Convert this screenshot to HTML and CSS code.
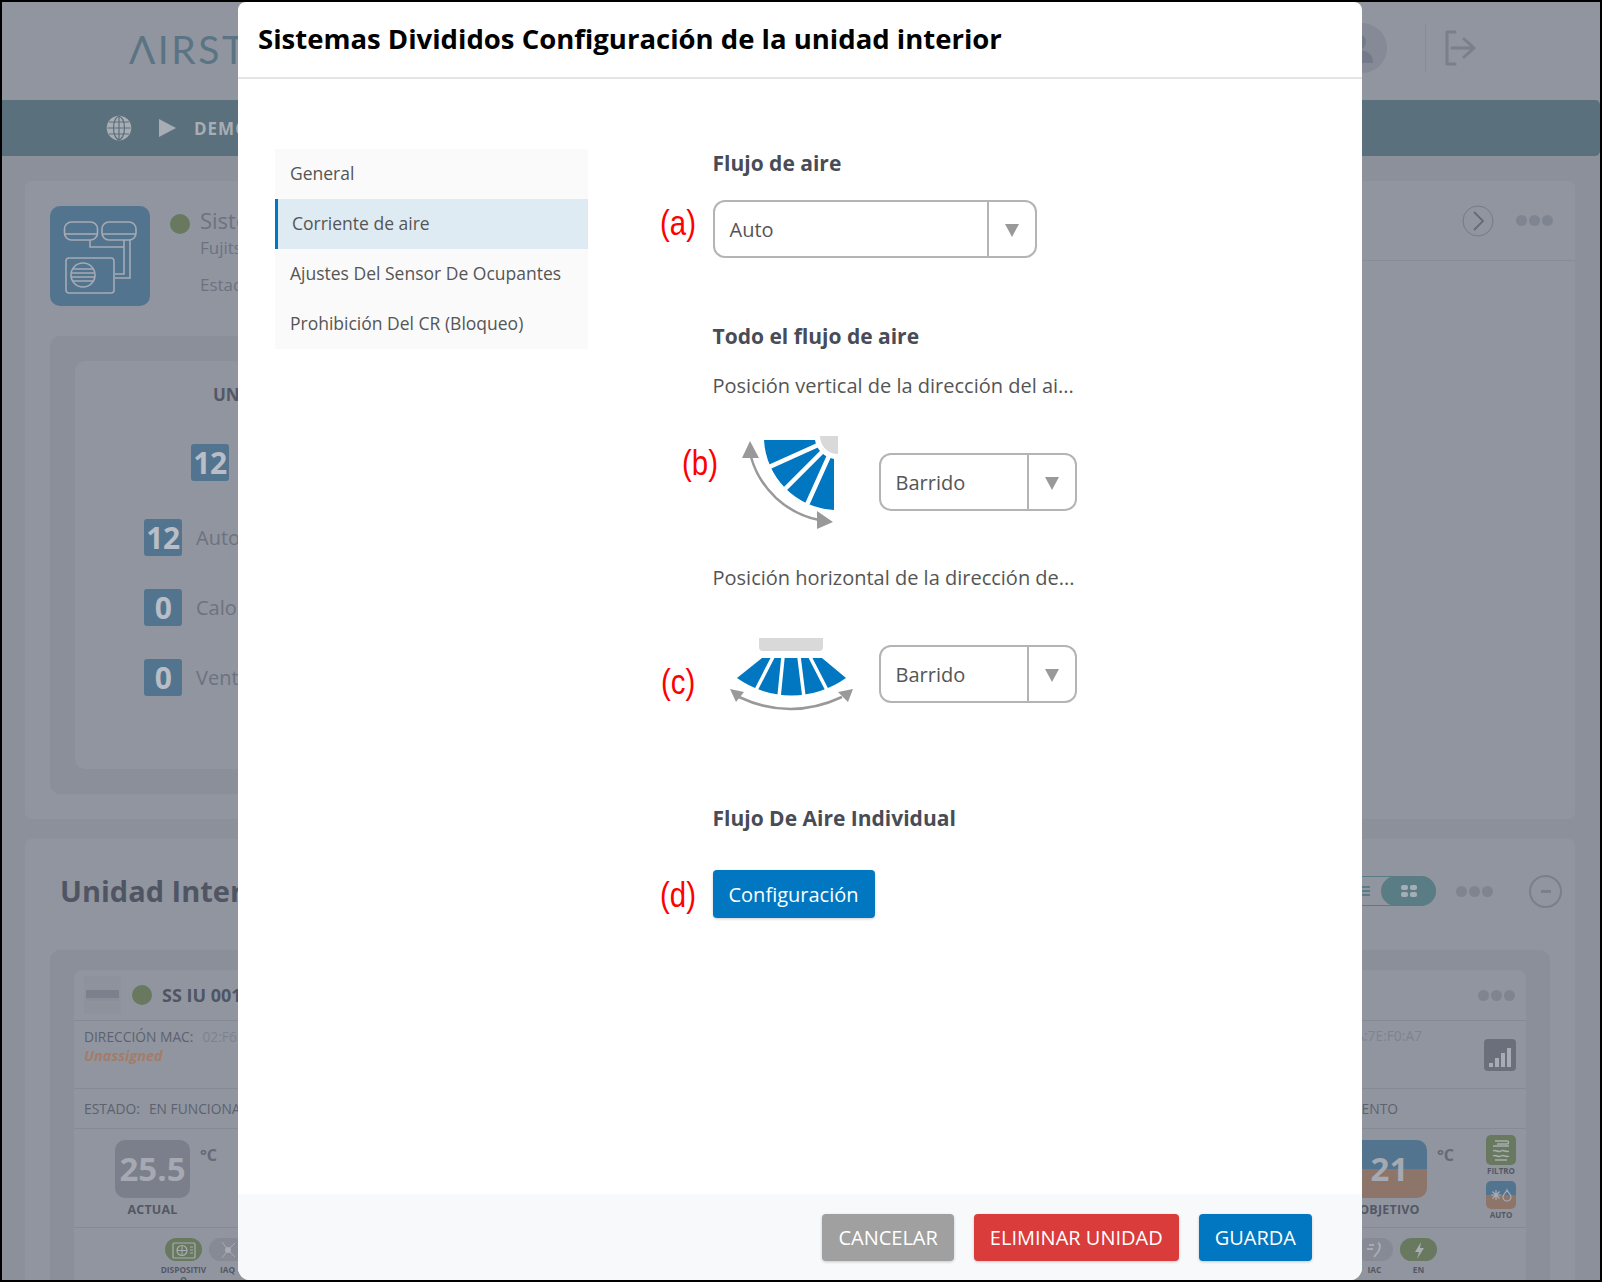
FILE: index.html
```html
<!DOCTYPE html>
<html lang="es">
<head>
<meta charset="utf-8">
<title>Sistemas Divididos Configuración de la unidad interior</title>
<link rel="stylesheet" href="styles.css">
</head>
<body>
<div class="frame">
  <div class="app">
    <header class="top">
      <div class="logo">ΛIRST</div>
      <div class="top-right">
        <div class="avatar">
          <svg viewBox="0 0 50 50" width="50" height="50"><circle cx="21" cy="19" r="8" fill="#747a89"/><path d="M7 40c0-10 6-13 14-13s15 3 15 13z" fill="#747a89"/></svg>
        </div>
        <div class="top-sep"></div>
        <svg class="exit" viewBox="0 0 32 36" width="32" height="36"><path d="M11 2H3v32h8" fill="none" stroke="#7a7f8c" stroke-width="3" stroke-linejoin="round" stroke-linecap="round"/><path d="M8 18h21M20 9l10 9-10 9" fill="none" stroke="#7a7f8c" stroke-width="3" stroke-linecap="round" stroke-linejoin="round"/></svg>
      </div>
    </header>
    <nav class="bar">
      <svg viewBox="0 0 26 26" width="26" height="26"><g fill="none" stroke="#a8adb5" stroke-width="1.6"><circle cx="13" cy="13" r="11.5" fill="#a8adb5"/></g><g fill="none" stroke="#5a707d" stroke-width="1.2"><ellipse cx="13" cy="13" rx="5.5" ry="11.5"/><path d="M13 1v24M1.500 13h23M3 7h20M3 19h20"/></g></svg>
      <svg class="play" viewBox="0 0 17 18" width="17" height="18"><path d="M0 0l17 9-17 9z" fill="#a8adb5"/></svg>
      <span class="crumb">DEMO</span>
    </nav>

    <section class="card card-system">
      <div class="sys-left">
        <div class="sys-top">
          <div class="sys-tile">
            <svg viewBox="0 0 100 100" width="100" height="100"><g fill="none" stroke="#a6abb5" stroke-width="1.6"><rect x="14.500" y="16" width="33" height="18" rx="7"/><path d="M15 28h32"/><rect x="52" y="16" width="34" height="18" rx="7"/><path d="M52 28h34"/><path d="M40 34v7h32M80 34v38H65M74 34v34h-9M40 41h34"/><rect x="16" y="52" width="48" height="35" rx="3"/><circle cx="33" cy="69" r="12"/><path d="M23 63h20M21.500 67h23M21.500 71h23M23 75h20"/></g></svg>
          </div>
          <span class="dot-green"></span>
          <div class="sys-text">
            <div class="sys-name">Sistema</div>
            <div class="sys-sub">Fujitsu</div>
            <div class="sys-state">Estado</div>
          </div>
        </div>
        <div class="panel">
          <div class="panel-in">
            <div class="units-title">UNIDADES</div>
            <div class="num-tile num-main">12</div>
            <div class="mode-row"><span class="num-tile">12</span><span>Auto</span></div>
            <div class="mode-row"><span class="num-tile">0</span><span>Calor</span></div>
            <div class="mode-row"><span class="num-tile">0</span><span>Vent</span></div>
          </div>
        </div>
      </div>
      <div class="sys-right">
        <svg viewBox="0 0 32 32" width="32" height="32"><circle cx="16" cy="16" r="15" fill="none" stroke="#757a87" stroke-width="1"/><path d="M12 7l9 9-9 9" fill="none" stroke="#656a78" stroke-width="1.800"/></svg>
        <div class="dots"><i></i><i></i><i></i></div>
      </div>
    </section>

    <section class="card card-units">
      <div class="units-head">
        <h2 class="units-h">Unidad Interior</h2>
        <div class="units-tools">
          <div class="toggle">
            <span class="toggle-list"><i></i><i></i><i></i></span>
            <span class="toggle-on"><svg viewBox="0 0 16 12" width="16" height="12"><g fill="#a7adb5"><rect x="0" y="0" width="7" height="5" rx="2"/><rect x="9" y="0" width="7" height="5" rx="2"/><rect x="0" y="7" width="7" height="5" rx="2"/><rect x="9" y="7" width="7" height="5" rx="2"/></g></svg></span>
          </div>
          <div class="dots"><i></i><i></i><i></i></div>
          <div class="minus"><i></i></div>
        </div>
      </div>
      <div class="panel panel-wide">
        <div class="unit">
          <div class="u-row u-head">
            <div class="u-head-left">
              <span class="u-thumb"><i></i></span>
              <span class="dot-green"></span>
              <strong class="u-name">SS IU 001</strong>
            </div>
            <div class="dots"><i></i><i></i><i></i></div>
          </div>
          <div class="u-row u-mac">
            <div>
              <div class="u-mac-line"><span class="u-label">DIRECCIÓN MAC:</span><span class="u-val">02:F6:8A:7E:F0:A7</span></div>
              <div class="u-warn">Unassigned</div>
            </div>
            <div class="u-mac-right">
              <span class="u-val u-mac-line">02:F6:8A:7E:F0:A7</span>
              <span class="signal"><svg viewBox="0 0 32 32" width="32" height="32"><g fill="#a7abb4"><rect x="5" y="24" width="4" height="4"/><rect x="11" y="19" width="4" height="9"/><rect x="17" y="14" width="4" height="14"/><rect x="23" y="9" width="4" height="19"/></g></svg></span>
            </div>
          </div>
          <div class="u-row u-state">
            <div><span class="u-label">ESTADO:</span><span class="u-state-val">EN FUNCIONAMIENTO</span></div>
            <div class="u-state-right">EN FUNCIONAMIENTO</div>
          </div>
          <div class="u-row u-temps">
            <div class="temp-block">
              <div class="temp-col"><div class="temp-tile">25.5</div><div class="temp-cap">ACTUAL</div></div>
              <span class="deg">°C</span>
            </div>
            <div class="temp-block temp-right">
              <div class="temp-col"><div class="temp-tile temp-split">21</div><div class="temp-cap">OBJETIVO</div></div>
              <span class="deg">°C</span>
              <div class="side-icons">
                <div class="side"><span class="side-tile side-green"><svg viewBox="0 0 30 30" width="30" height="30"><path d="M9 6h12c2 0 2 3 0 3H11M7 11h16M7 16c3-2 5 2 8 0s5 2 8 0M7 21c3-2 5 2 8 0s5 2 8 0M9 25h12" fill="none" stroke="#a7adb0" stroke-width="1.500"/></svg></span><span class="side-cap">FILTRO</span></div>
                <div class="side"><span class="side-tile side-split"><svg viewBox="0 0 30 28" width="30" height="28"><path d="M10 9v10M5 14h10M6.500 10.500l7 7M13.500 10.500l-7 7" stroke="#a7adb5" stroke-width="1.200"/><path d="M21 9c1 3 4 4 4 7a4 4 0 0 1-8 0c0-3 3-4 4-7z" fill="none" stroke="#a7adb5" stroke-width="1.200"/></svg></span><span class="side-cap">AUTO</span></div>
              </div>
            </div>
          </div>
          <div class="u-row u-pills">
            <div class="pills">
              <div class="pill-item"><span class="pill pill-green"><svg viewBox="0 0 28 22" width="28" height="22"><rect x="3" y="4" width="22" height="15" rx="1" fill="none" stroke="#a7adb0" stroke-width="1.200"/><circle cx="12" cy="11.500" r="5" fill="none" stroke="#a7adb0" stroke-width="1.200"/><path d="M20 8h3M20 11h3M20 14h3M7 11.500h10M12 7v9" stroke="#a7adb0"/></svg></span><span class="pill-cap">DISPOSITIVO</span></div>
              <div class="pill-item"><span class="pill"><svg viewBox="0 0 28 22" width="28" height="22"><path d="M8 3l6 8 7-7M14 11l-6 8M14 11l7 7" stroke="#a7abb4" fill="none"/><circle cx="14" cy="11" r="3" fill="#a7abb4"/></svg></span><span class="pill-cap">IAQ</span></div>
            </div>
            <div class="pills">
              <div class="pill-item"><span class="pill"><svg viewBox="0 0 28 22" width="28" height="22"><path d="M17 4c3 1 2 6 0 9l-4 5M8 6h5M6 10h6" fill="none" stroke="#a7abb4" stroke-width="2"/></svg></span><span class="pill-cap">IAC</span></div>
              <div class="pill-item"><span class="pill pill-green"><svg viewBox="0 0 28 22" width="28" height="22"><path d="M16 3l-6 10h4l-2 7 7-11h-4z" fill="#a7adb0"/></svg></span><span class="pill-cap">EN</span></div>
            </div>
          </div>
        </div>
      </div>
    </section>
  </div>

  <div class="modal">
    <header class="m-head"><h1 class="m-title">Sistemas Divididos Configuración de la unidad interior</h1></header>
    <div class="m-body">
      <ul class="menu">
        <li class="menu-item">General</li>
        <li class="menu-item is-active">Corriente de aire</li>
        <li class="menu-item">Ajustes Del Sensor De Ocupantes</li>
        <li class="menu-item">Prohibición Del CR (Bloqueo)</li>
      </ul>
      <div class="form">
        <h3 class="f-h f-first">Flujo de aire</h3>
        <div class="select select-wide sec-a">
          <span class="anno anno-a">(a)</span>
          <span class="select-val">Auto</span><span class="select-btn"><i class="tri"></i></span>
        </div>
        <h3 class="f-h sec-b">Todo el flujo de aire</h3>
        <p class="f-p sec-p1">Posición vertical de la dirección del ai...</p>
        <div class="dir-row row-b">
          <span class="anno anno-b">(b)</span>
          <svg viewBox="0 1 140 110" width="140" height="110">
            <path d="M44 14L95 14A23 23 0 0 0 114 33L114 84A74 74 0 0 1 44 14Z" fill="#0077c0"/>
            <path d="M118 10L36 47M118 10L54 74M118 10L81 92" stroke="#fff" stroke-width="4.500"/>
            <path d="M118 10L100 10A18 18 0 0 0 118 28Z" fill="#d9d9d9"/>
            <path d="M31 31A89 89 0 0 0 99 94" fill="none" stroke="#999" stroke-width="2.500"/>
            <path d="M30 15L39 32L22 32Z M113 96L97 85L97 103Z" fill="#999"/>
          </svg>
          <div class="select"><span class="select-val">Barrido</span><span class="select-btn"><i class="tri"></i></span></div>
        </div>
        <p class="f-p sec-p2">Posición horizontal de la dirección de...</p>
        <div class="dir-row row-c">
          <span class="anno anno-c">(c)</span>
          <svg viewBox="0 -1 140 90" width="140" height="90">
            <path d="M39 8H103V17A4 4 0 0 1 99 21H43A4 4 0 0 1 39 17Z" fill="#d9d9d9"/>
            <path d="M42 28L102 28L126 48A94 94 0 0 1 17 48Z" fill="#0077c0"/>
            <path d="M53 27L35 62M63 27L59 67M79 27L84 67M90 27L108 62" stroke="#fff" stroke-width="3.500"/>
            <path d="M19 67Q70 91 122 67" fill="none" stroke="#999" stroke-width="2.500"/>
            <path d="M10 59L24 62L16 72Z M133 59L118 62L128 72Z" fill="#999"/>
          </svg>
          <div class="select"><span class="select-val">Barrido</span><span class="select-btn"><i class="tri"></i></span></div>
        </div>
        <h3 class="f-h sec-d">Flujo De Aire Individual</h3>
        <div class="cfg-wrap">
          <span class="anno anno-d">(d)</span>
          <button class="btn btn-blue btn-cfg">Configuración</button>
        </div>
      </div>
    </div>
    <footer class="m-foot">
      <button class="btn btn-grey">CANCELAR</button>
      <button class="btn btn-red">ELIMINAR UNIDAD</button>
      <button class="btn btn-blue">GUARDA</button>
    </footer>
  </div>
</div>
</body>
</html>
```
FILE: styles.css
```css
* { box-sizing: border-box; }
html, body { margin: 0; padding: 0; }
body { font-family: "Open Sans", sans-serif; background: #000; }
.frame { position: relative; width: 1602px; height: 1282px; border: 2px solid #000; overflow: hidden; background: #8b909b; }
.app { height: 100%; overflow: hidden; color: #6d7280; }

.top { height: 98px; display: flex; align-items: center; justify-content: space-between; padding: 0 0 0 127px; background: #91959f; }
.logo { font-family: Lato, sans-serif; font-weight: 400; font-size: 39px; line-height: 40px; letter-spacing: 2.5px; color: #5a7484; margin-top: -4px; }
.top-right { display: flex; align-items: center; padding-right: 124px; margin-top: -6px; }
.avatar { width: 50px; height: 50px; border-radius: 50%; background: #858a96; margin-right: 38px; overflow: hidden; }
.avatar svg { display: block; }
.top-sep { width: 1px; height: 50px; background: #888c97; margin-right: 18px; }
.exit { display: block; }

.bar { height: 56px; background: #5a707d; display: flex; align-items: center; padding-left: 104px; border-radius: 0 5px 5px 0; }
.play { margin-left: 27px; }
.crumb { margin-left: 18px; font-size: 17px; font-weight: 700; color: #a8adb5; letter-spacing: 1px; }

.card { margin: 25px 25px 0 23px; background: #91959f; border-radius: 6px; }
.card-system { display: flex; justify-content: space-between; height: 638px; }
.sys-left { width: 640px; padding: 25px 0 0 25px; }
.sys-top { display: flex; height: 100px; }
.sys-tile { width: 100px; height: 100px; border-radius: 10px; background: #52748f; }
.sys-tile svg { display: block; }
.dot-green { display: block; width: 20px; height: 20px; border-radius: 50%; background: #68795f; }
.sys-top .dot-green { margin: 8px 0 0 20px; }
.sys-text { margin-left: 10px; font-size: 17px; line-height: 24px; }
.sys-name { font-size: 22px; line-height: 28px; }
.sys-sub { margin-top: 2px; line-height: 24px; }
.sys-state { margin-top: 13px; }
.panel { margin-top: 30px; padding: 25px; background: #8b8f99; border-radius: 10px; height: 458px; }
.panel-in { height: 408px; background: #91959f; border-radius: 10px; padding: 22px 0 0 69px; }
.units-title { margin-left: 69px; font-size: 17px; line-height: 24px; font-weight: 700; color: #535866; }
.num-tile { display: flex; align-items: center; justify-content: center; width: 38px; height: 37px; border-radius: 3px; background: #52748f; color: #b8bdc6; font-weight: 700; font-size: 30px; line-height: 37px; letter-spacing: -0.5px; flex: none; }
.num-main { margin: 37px 0 0 47px; }
.mode-row { display: flex; align-items: center; gap: 14px; font-size: 20px; color: #6d7280; margin-top: 33px; }
.num-main + .mode-row { margin-top: 38px; }
.sys-right { width: 300px; height: 80px; border-bottom: 1px solid #888c97; display: flex; align-items: center; justify-content: flex-end; gap: 22px; padding-right: 22px; }
.sys-right svg { display: block; }
.dots { display: flex; gap: 2px; }
.dots i { display: block; width: 11px; height: 11px; border-radius: 50%; background: #7f8491; }

.card-units { margin-top: 20px; height: 600px; }
.units-head { height: 102px; margin-bottom: 9px; display: flex; align-items: center; justify-content: space-between; padding: 0 13px 0 35px; }
.units-h { margin: 2px 0 0; font-size: 29px; font-weight: 700; color: #4f5563; line-height: 40px; }
.units-tools { display: flex; align-items: center; margin-top: 2px; }
.toggle { width: 130px; height: 30px; border: 1px solid #5a7d85; border-radius: 15px; display: flex; justify-content: flex-end; align-items: center; }
.toggle-list { display: flex; flex-direction: column; gap: 2px; margin-right: 11px; }
.toggle-list i { display: block; width: 8px; height: 2px; background: #5a7d85; }
.toggle-on { display: flex; align-items: center; justify-content: center; width: 55px; height: 30px; margin-right: -1px; border-radius: 15px; background: #5a7d85; }
.toggle-on svg { display: block; }
.units-tools .dots { margin-left: 20px; }
.minus { margin-left: 36px; width: 33px; height: 33px; border-radius: 50%; border: 2.500px solid #7a7f8c; display: flex; align-items: center; justify-content: center; }
.minus i { display: block; width: 10px; height: 3px; background: #7a7f8c; }
.panel-wide { margin: 0 25px; padding: 20px 24px 0; height: 400px; }
.unit { background: #91959f; border-radius: 8px 8px 0 0; height: 380px; }
.u-row { display: flex; justify-content: space-between; padding: 0 10px; border-bottom: 1px solid #868a95; }
.u-head { height: 51px; align-items: center; padding-right: 11px; }
.u-head-left { display: flex; align-items: center; }
.u-thumb { display: flex; align-items: center; justify-content: center; width: 37px; height: 38px; background: #8e929c; margin-right: 11px; }
.u-thumb i { display: block; width: 33px; height: 11px; background: #7b808c; border-radius: 1px; border-bottom: 3px solid #8a8e98; }
.u-name { margin-left: 10px; font-size: 18px; font-weight: 700; color: #4f5563; }
.u-mac { height: 68px; padding-top: 5px; }
.u-mac-line { line-height: 20px; }
.u-label { font-size: 13.800px; color: #5c6270; }
.u-val { margin-left: 9px; font-size: 13.800px; color: #7e8390; }
.u-warn { font-size: 14.500px; line-height: 18px; font-weight: 700; font-style: italic; color: #a47c6a; }
.u-mac-right { display: flex; align-items: flex-start; gap: 62px; }
.signal { display: block; width: 32px; height: 32px; margin-top: 13px; border-radius: 4px; background: #6b6f7b; }
.signal svg { display: block; }
.u-state { height: 40px; align-items: center; font-size: 13.800px; color: #5c6270; padding-right: 128px; }
.u-state-val { margin-left: 9px; }
.u-temps { height: 99px; padding: 11px 10px 0 41px; }
.temp-block { display: flex; align-items: flex-start; }
.temp-col { display: flex; flex-direction: column; align-items: center; }
.temp-tile { width: 75px; height: 58px; border-radius: 10px; background: #7a7f8b; color: #a6a9b2; font-weight: 700; font-size: 33px; line-height: 58px; text-align: center; }
.temp-split { background: linear-gradient(#52748f 50%, #8e7569 50%); }
.temp-cap { margin-top: 2px; font-size: 12.500px; line-height: 20px; font-weight: 700; color: #535866; letter-spacing: .2px; }
.deg { margin-left: 10px; font-size: 16px; line-height: 30px; font-weight: 700; color: #646a78; }
.temp-right { margin-top: 0; }
.side-icons { display: flex; flex-direction: column; align-items: center; margin-left: 32px; margin-top: -5px; gap: 1px; }
.side { display: flex; flex-direction: column; align-items: center; }
.side-tile { display: block; width: 30px; height: 30px; border-radius: 5px; }
.side-tile svg { display: block; }
.side-green { background: #68795f; }
.side-split { height: 28px; margin-top: 3px; background: linear-gradient(#52748f 50%, #8e7569 50%); }
.side-cap { font-size: 8px; line-height: 12px; font-weight: 700; color: #535866; }
.u-pills { border-bottom: 0; padding: 10px 89px 0 91px; }
.pills { display: flex; gap: 7px; }
.pill-item { display: flex; flex-direction: column; align-items: center; width: 37px; }
.pill { display: flex; align-items: center; justify-content: center; width: 37px; height: 23px; border-radius: 12px; background: #858a95; }
.pill-green { background: #68795f; }
.pill-cap { flex: none; width: 50px; font-size: 8.300px; line-height: 10px; font-weight: 700; color: #535866; text-align: center; word-break: break-all; margin-top: 4px; }

.modal { position: absolute; left: 235.500px; top: 0; width: 1124.500px; height: 1278px; background: #fff; border-radius: 8px 8px 12px 12px; display: flex; flex-direction: column; overflow: hidden; }
.m-head { height: 77px; border-bottom: 2px solid #e5e5e5; padding: 0 0 0 20.500px; display: flex; align-items: center; flex: none; }
.m-title { margin: 0 0 2px; font-size: 27.500px; line-height: 36px; font-weight: 700; color: #000; }
.m-body { flex: 1; display: flex; padding: 70px 0 0 37.500px; }
.menu { list-style: none; margin: 0; padding: 0; width: 312.500px; height: 200px; background: #fafafa; flex: none; }
.menu-item { height: 50px; line-height: 49px; padding-left: 15px; font-size: 17.500px; color: #555; }
.is-active { background: #dfebf3; border-left: 3px solid #0077c0; padding-left: 14px; color: #555; }
.form { margin-left: 125px; width: 400px; }
.f-h { margin: 0; font-size: 21px; line-height: 30px; font-weight: 700; color: #484c56; }
.f-first { line-height: 29px; }
.f-p { margin: 0; font-size: 20px; line-height: 30px; color: #555; white-space: nowrap; }
.select { position: relative; display: flex; width: 198px; height: 58px; border: 2px solid #b4b4b4; border-radius: 12px; background: #fff; }
.select-wide { width: 324px; margin-top: 22px; }
.select-val { flex: 1; padding: 1px 0 0 15px; font-size: 20px; line-height: 54px; color: #555; }
.select-btn { width: 48px; border-left: 2px solid #b4b4b4; display: flex; align-items: center; justify-content: center; padding-top: 3px; flex: none; }
.tri { display: block; width: 0; height: 0; border-left: 7px solid transparent; border-right: 7px solid transparent; border-top: 13px solid #999; }
.sec-b { margin-top: 63px; }
.sec-p1 { margin-top: 20px; }
.dir-row { position: relative; display: flex; align-items: center; margin-left: 7px; gap: 19px; }
.dir-row svg { display: block; flex: none; }
.row-b { margin-top: 26px; height: 110px; }
.sec-p2 { margin-top: 26px; }
.row-c { margin-top: 36px; height: 90px; }
.sec-d { margin-top: 84px; }
.cfg-wrap { position: relative; margin-top: 37px; }
.anno { position: absolute; font-family: "Liberation Sans", Arial, sans-serif; font-size: 35px; line-height: 36px; color: #f00; transform: scaleX(.84); transform-origin: left center; white-space: nowrap; }
.anno-a { left: -55px; top: 3px; }
.anno-b { left: -38px; top: 18px; }
.anno-c { left: -59px; top: 35px; }
.anno-d { left: -53px; top: 7px; }
.btn { display: block; height: 47px; border: 0; border-radius: 4px; padding: 0 16px; font-family: "Open Sans", sans-serif; font-size: 20px; color: #fff; box-shadow: 0 1px 3px rgba(0,0,0,.2); }
.btn-cfg { width: 162px; height: 48px; padding: 0; }
.btn-blue { background: #0077c0; }
.btn-grey { background: #a0a0a0; }
.btn-red { background: #da3b3b; }
.m-foot { height: 86px; flex: none; background: #f8f9fb; display: flex; justify-content: flex-end; gap: 20px; padding: 20px 50px 0 0; }
```
